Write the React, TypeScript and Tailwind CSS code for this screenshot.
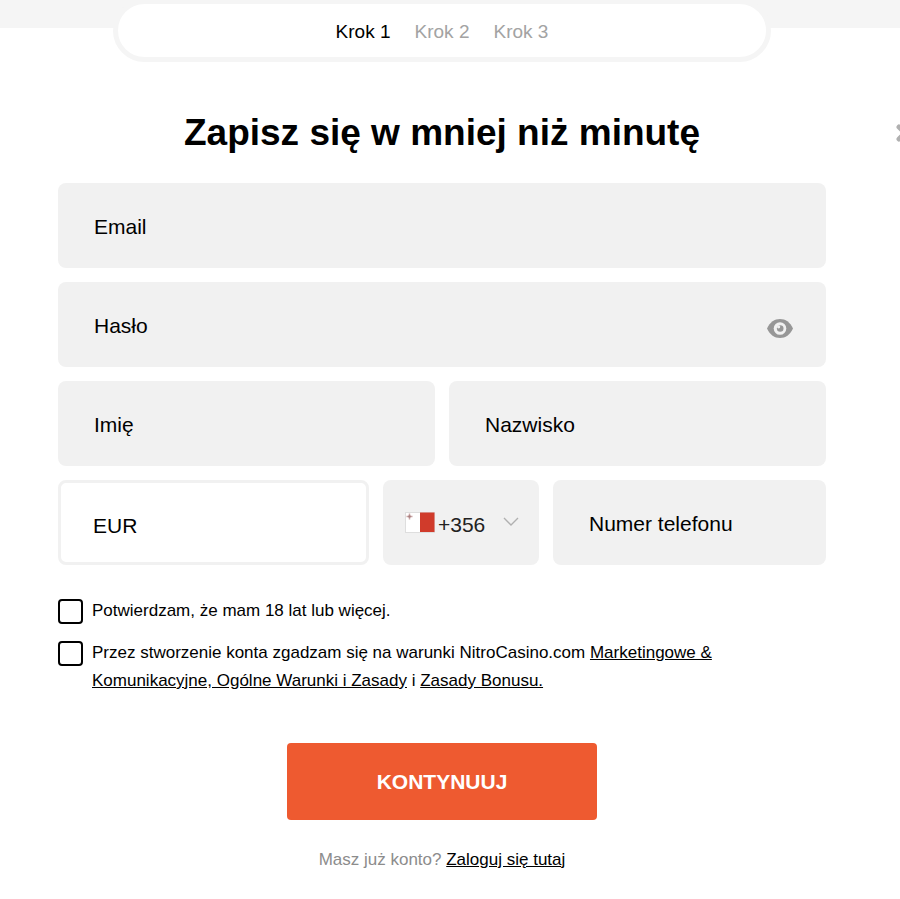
import { useState } from "react";

const steps = ["Krok 1", "Krok 2", "Krok 3"];

export default function App() {
  const [showPassword, setShowPassword] = useState(false);

  return (
    <div className="relative min-h-screen overflow-hidden bg-white pb-6 font-['Liberation_Sans',Arial,sans-serif] text-black">
      <div className="h-7 bg-[#f5f5f5]" />

      <button type="button" aria-label="Zamknij" className="absolute top-[124px] -right-[14px] text-[#b0b0b0]">
        <svg width="18" height="18" viewBox="0 0 18 18" fill="none" stroke="currentColor" strokeWidth="5" strokeLinecap="round">
          <path d="M3 3l12 12M15 3L3 15" />
        </svg>
      </button>

      <main className="pr-[74px] pl-[58px]">
        <nav className="mx-auto -mt-[29px] flex h-[63px] w-6/7 items-center justify-center gap-6 rounded-full border-5 border-[#f5f5f5] bg-white pt-1 text-[19px]">
          {steps.map((step, i) => (
            <span key={step} className={i === 0 ? "text-black" : "text-[#a3a3a3]"}>{step}</span>
          ))}
        </nav>

        <h1 className="mt-12 text-center text-[37px] leading-[46px] font-bold">Zapisz się w mniej niż minutę</h1>

        <form className="mt-[27px]" onSubmit={(e) => e.preventDefault()}>
          <div className="flex flex-col gap-[14px]">
            <Field id="email" label="Email" type="email" />
            <div className="relative">
              <Field id="password" label="Hasło" type={showPassword ? "text" : "password"} />
              <button
                type="button"
                aria-label="Pokaż hasło"
                className="absolute top-9 right-[33px] text-[#979797]"
                onClick={() => setShowPassword(!showPassword)}
              >
                <EyeIcon />
              </button>
            </div>
            <div className="grid grid-cols-2 gap-[14px]">
              <Field id="first-name" label="Imię" />
              <Field id="last-name" label="Nazwisko" />
            </div>
            <div className="grid grid-cols-[311fr_156fr_273fr] gap-[14px]">
              <select aria-label="Waluta" className="h-[85px] w-full appearance-none rounded-lg border-3 border-[#f1f1f1] bg-white px-8 pt-1.5 text-[21px]">
                <option>EUR</option>
              </select>
              <div className="relative">
                <select aria-label="Numer kierunkowy" className="h-[85px] w-full appearance-none rounded-lg bg-[#f1f1f1] pt-1 pl-[55px] text-[21px] text-[#222]">
                  <option>+356</option>
                </select>
                <span className="pointer-events-none absolute top-8 left-[22px]"><MaltaFlag /></span>
                <svg className="pointer-events-none absolute top-9 right-5" width="16" height="12" viewBox="0 0 16 12" fill="none" stroke="#b0b0b0" strokeWidth="1.4">
                  <path d="M1 2l7 7 7-7" />
                </svg>
              </div>
              <Field id="phone" label="Numer telefonu" type="tel" />
            </div>
          </div>

          <div className="mt-8 flex flex-col gap-[14px] text-[17px] leading-7">
            <Check id="age">Potwierdzam, że mam 18 lat lub więcej.</Check>
            <Check id="terms">
              Przez stworzenie konta zgadzam się na warunki NitroCasino.com{" "}
              <a href="#marketing" className="underline">Marketingowe &amp; Komunikacyjne, Ogólne Warunki i Zasady</a> i{" "}
              <a href="#bonus" className="underline">Zasady Bonusu.</a>
            </Check>
          </div>

          <button type="submit" className="mx-auto mt-12 block h-[77px] w-[310px] rounded-sm bg-[#ee5a30] text-[21px] font-bold text-white">
            KONTYNUUJ
          </button>
        </form>

        <p className="mt-[26px] text-center text-[17px] leading-7 text-[#8c8c8c]">
          Masz już konto? <a href="#login" className="text-black underline">Zaloguj się tutaj</a>
        </p>
      </main>
    </div>
  );
}

// label sits over the empty input and goes away once it is focused or filled
function Field({ id, label, type = "text" }: { id: string; label: string; type?: string }) {
  return (
    <div className="relative">
      <input
        id={id}
        type={type}
        placeholder=" "
        className="peer block h-[85px] w-full rounded-lg bg-[#f1f1f1] px-9 text-[21px]"
      />
      <label
        htmlFor={id}
        className="absolute top-7 left-9 hidden cursor-text text-[21px] leading-8 peer-placeholder-shown:block peer-focus:hidden"
      >
        {label}
      </label>
    </div>
  );
}

function Check({ id, children }: { id: string; children: React.ReactNode }) {
  return (
    <div className="flex items-start gap-[9px]">
      <input
        id={id}
        type="checkbox"
        className="mt-0.5 size-[25px] shrink-0 appearance-none rounded-sm border-2 border-black bg-white checked:bg-black"
      />
      <label htmlFor={id} className="max-w-[640px]">{children}</label>
    </div>
  );
}

function EyeIcon() {
  return (
    <svg width="26" height="20" viewBox="0 0 26 20">
      <path d="M0 10.500C3 4 7.500 1 13 1S23 4 26 10.500C23 17 18.500 20 13 20S3 17 0 10.500Z" fill="currentColor" />
      <circle cx="13" cy="10.500" r="6.300" fill="#f1f1f1" />
      <circle cx="13.200" cy="10.500" r="3.300" fill="currentColor" />
      <circle cx="11.600" cy="8.800" r="1.600" fill="#f1f1f1" />
    </svg>
  );
}

function MaltaFlag() {
  return (
    <svg width="30" height="22" viewBox="0 0 30 22">
      <rect x="0.500" y="0.500" width="29" height="20" fill="#fff" stroke="#dedede" />
      <rect x="15" y="0.500" width="14.500" height="19.500" fill="#d03b2b" />
      <path d="M4.500 1.500v6M1.500 4.500h6" stroke="#c9a5a5" strokeWidth="1.500" />
      <circle cx="4.500" cy="4.500" r="1.300" fill="#a98080" />
    </svg>
  );
}
